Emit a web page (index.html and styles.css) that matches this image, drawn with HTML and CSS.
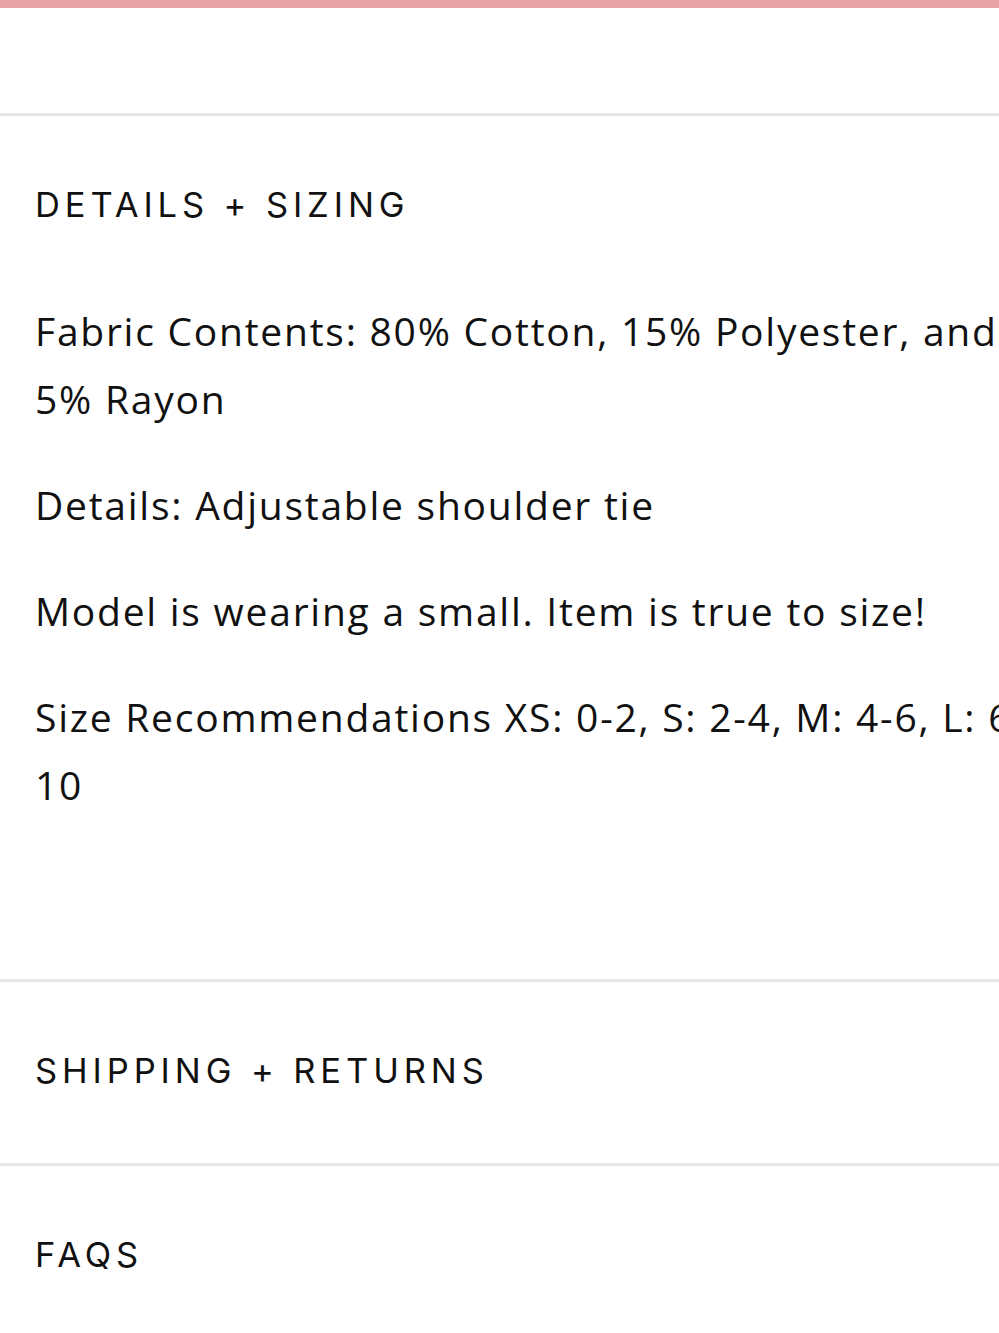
FILE: index.html
```html
<!DOCTYPE html>
<html lang="en">
<head>
  <meta charset="UTF-8" />
  <title>Product Details</title>
  <link rel="stylesheet" href="styles.css">
</head>
<body>
  <div class="top-bar"></div>
  <div class="spacer"></div>

  <div class="accordion">
    <div class="item open">
      <div class="item-title">DETAILS + SIZING</div>
      <div class="item-body">
        <p>Fabric Contents: 80% Cotton, 15% Polyester, and<br>5% Rayon</p>
        <p>Details: Adjustable shoulder tie</p>
        <p>Model is wearing a small. Item is true to size!</p>
        <p>Size Recommendations XS: 0-2, S: 2-4, M: 4-6, L: 6-8, XL: 8-<br>10</p>
      </div>
    </div>
    <div class="item">
      <div class="item-title">SHIPPING + RETURNS</div>
    </div>
    <div class="item">
      <div class="item-title">FAQS</div>
    </div>
  </div>
</body>
</html>
```

FILE: styles.css
```css
html, body {
  margin: 0;
  padding: 0;
  overflow: hidden;
}
body {
  font-family: "Open Sans", "Noto Sans", sans-serif;
  background: #fff;
  color: #111;
  width: 1400px;
}
.top-bar {
  height: 8px;
  background: #e8a5a7;
}
.spacer {
  height: 105px;
}
.item {
  border-top: 3px solid #e6e6e6;
}
.item-title {
  height: 181px;
  display: flex;
  align-items: center;
  padding-left: 35px;
  margin-top: -2px;
  margin-bottom: 2px;
  font-family: Inter, sans-serif;
  font-size: 34.5px;
  letter-spacing: 4.9px;
  color: #111;
}
.item-body {
  padding: 0 0 160px 35px;
  white-space: nowrap;
}
.item-body p {
  margin: 0 0 38px;
  font-size: 39px;
  line-height: 68px;
  letter-spacing: 1.75px;
}
.item-body p:last-child {
  margin-bottom: 0;
}
```
